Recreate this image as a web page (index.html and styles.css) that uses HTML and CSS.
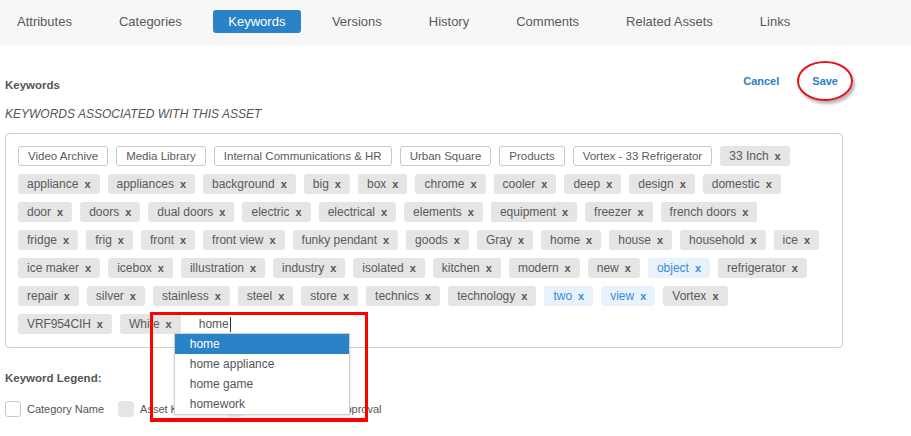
FILE: index.html
```html
<!DOCTYPE html>
<html lang="en">
<head>
<meta charset="utf-8">
<title>Keywords</title>
<link rel="stylesheet" href="styles.css">
</head>
<body>
<nav class="tabs">
  <a class="tab">Attributes</a>
  <a class="tab">Categories</a>
  <a class="tab active">Keywords</a>
  <a class="tab">Versions</a>
  <a class="tab">History</a>
  <a class="tab">Comments</a>
  <a class="tab">Related Assets</a>
  <a class="tab">Links</a>
</nav>
<main class="content">
  <div class="kw-header">
    <h2 class="kw-title">Keywords</h2>
    <div class="actions">
      <a class="action">Cancel</a>
      <a class="action save">Save<span class="circle"></span></a>
    </div>
  </div>
  <p class="subtitle">KEYWORDS ASSOCIATED WITH THIS ASSET</p>
  <div class="tagbox">
    <span class="tag cat">Video Archive</span>
    <span class="tag cat">Media Library</span>
    <span class="tag cat">Internal Communications &amp; HR</span>
    <span class="tag cat">Urban Square</span>
    <span class="tag cat">Products</span>
    <span class="tag cat">Vortex - 33 Refrigerator</span>
    <span class="tag">33 Inch<b class="x">x</b></span>
    <span class="tag">appliance<b class="x">x</b></span>
    <span class="tag">appliances<b class="x">x</b></span>
    <span class="tag">background<b class="x">x</b></span>
    <span class="tag">big<b class="x">x</b></span>
    <span class="tag">box<b class="x">x</b></span>
    <span class="tag">chrome<b class="x">x</b></span>
    <span class="tag">cooler<b class="x">x</b></span>
    <span class="tag">deep<b class="x">x</b></span>
    <span class="tag">design<b class="x">x</b></span>
    <span class="tag">domestic<b class="x">x</b></span>
    <span class="tag">door<b class="x">x</b></span>
    <span class="tag">doors<b class="x">x</b></span>
    <span class="tag">dual doors<b class="x">x</b></span>
    <span class="tag">electric<b class="x">x</b></span>
    <span class="tag">electrical<b class="x">x</b></span>
    <span class="tag">elements<b class="x">x</b></span>
    <span class="tag">equipment<b class="x">x</b></span>
    <span class="tag">freezer<b class="x">x</b></span>
    <span class="tag">french doors<b class="x">x</b></span>
    <span class="tag">fridge<b class="x">x</b></span>
    <span class="tag">frig<b class="x">x</b></span>
    <span class="tag">front<b class="x">x</b></span>
    <span class="tag">front view<b class="x">x</b></span>
    <span class="tag">funky pendant<b class="x">x</b></span>
    <span class="tag">goods<b class="x">x</b></span>
    <span class="tag">Gray<b class="x">x</b></span>
    <span class="tag">home<b class="x">x</b></span>
    <span class="tag">house<b class="x">x</b></span>
    <span class="tag">household<b class="x">x</b></span>
    <span class="tag">ice<b class="x">x</b></span>
    <span class="tag">ice maker<b class="x">x</b></span>
    <span class="tag">icebox<b class="x">x</b></span>
    <span class="tag">illustration<b class="x">x</b></span>
    <span class="tag">industry<b class="x">x</b></span>
    <span class="tag">isolated<b class="x">x</b></span>
    <span class="tag">kitchen<b class="x">x</b></span>
    <span class="tag">modern<b class="x">x</b></span>
    <span class="tag">new<b class="x">x</b></span>
    <span class="tag pending">object<b class="x">x</b></span>
    <span class="tag">refrigerator<b class="x">x</b></span>
    <span class="tag">repair<b class="x">x</b></span>
    <span class="tag">silver<b class="x">x</b></span>
    <span class="tag">stainless<b class="x">x</b></span>
    <span class="tag">steel<b class="x">x</b></span>
    <span class="tag">store<b class="x">x</b></span>
    <span class="tag">technics<b class="x">x</b></span>
    <span class="tag">technology<b class="x">x</b></span>
    <span class="tag pending">two<b class="x">x</b></span>
    <span class="tag pending">view<b class="x">x</b></span>
    <span class="tag">Vortex<b class="x">x</b></span>
    <span class="tag code">VRF954CIH<b class="x">x</b></span>
    <span class="tag">White<b class="x">x</b></span>
    <span class="entry">
      <span class="entry-text">home</span><span class="caret"></span>
      <ul class="suggest">
        <li class="sel">home</li>
        <li>home appliance</li>
        <li>home game</li>
        <li>homework</li>
      </ul>
      <span class="highlight"></span>
    </span>
  </div>
  <h3 class="legend-title">Keyword Legend:</h3>
  <div class="legend">
    <span class="legend-item"><span class="swatch sw-cat"></span>Category Name</span>
    <span class="legend-item"><span class="swatch sw-asset"></span>Asset Keyword</span>
    <span class="legend-item"><span class="swatch sw-pending"></span>Pending Keyword Approval</span>
  </div>
</main>
</body>
</html>
```

FILE: styles.css
```css
* { box-sizing: border-box; }
html { height: 100%; }
html, body { margin: 0; padding: 0; background: #fff; }
body {
  min-height: 100%;
  font-family: "Liberation Sans", Arial, sans-serif;
  color: #555;
  font-size: 12px;
}
.tabs {
  display: flex;
  align-items: flex-start;
  gap: 15px;
  height: 45px;
  padding: 10px 0 0 1px;
  background: #f7f7f7;
}
.tab {
  display: block;
  height: 23px;
  line-height: 23px;
  padding: 0 16px;
  font-size: 13px;
  color: #595959;
  border-radius: 3px;
}
.tab.active {
  background: #2a82c7;
  color: #fff;
  padding: 0 15.5px;
}
.content {
  width: 843px;
  padding-left: 5px;
  padding-bottom: 20px;
}
.kw-header {
  display: flex;
  justify-content: space-between;
  align-items: flex-start;
  margin-top: 28px;
}
.kw-title {
  margin: 4px 0 0;
  font-size: 11.5px;
  line-height: 16px;
  font-weight: bold;
  color: #555;
}
.actions {
  display: flex;
  gap: 33px;
  padding-right: 5px;
}
.action {
  font-size: 11px;
  line-height: 16px;
  font-weight: bold;
  color: #2e7ec0;
}
.save { position: relative; }
.circle {
  position: absolute;
  left: -15px;
  top: -12px;
  width: 56px;
  height: 40px;
  border: 2px solid #e1141c;
  border-radius: 50%;
  box-shadow: 2px 3px 3px rgba(0,0,0,0.28);
}
.subtitle {
  margin: 13px 0 0;
  font-size: 12px;
  line-height: 16px;
  font-style: italic;
  color: #555;
}
.tagbox {
  margin-top: 11px;
  border: 1px solid #cfcfcf;
  border-radius: 4px;
  padding: 12px 12px 5px 12px;
  display: flex;
  flex-wrap: wrap;
  align-items: flex-start;
}
.tag {
  display: inline-flex;
  align-items: center;
  height: 20px;
  line-height: 20px;
  padding: 0 9px;
  margin: 0 8px 8px 0;
  background: #e5e5e5;
  border-radius: 3px;
  color: #5a5a5a;
  white-space: nowrap;
  font-size: 12px;
}
.tag.cat {
  background: #fff;
  border: 1px solid #c9c9c9;
  line-height: 18px;
  font-size: 11.5px;
}
.tag.code { letter-spacing: -0.1px; }
.tag.pending {
  background: #e7f2fc;
  color: #3d8bd2;
}
.x {
  font-size: 11px;
  font-weight: bold;
  margin-left: 6px;
  color: #555;
  letter-spacing: 0;
}
.tag.pending .x { color: #3d8bd2; }
.entry {
  position: relative;
  display: inline-flex;
  align-items: center;
  height: 20px;
  padding-left: 10px;
  margin-bottom: 8px;
  font-size: 12px;
  color: #555;
}
.caret {
  display: inline-block;
  width: 1px;
  height: 15px;
  background: #333;
  margin-left: 1px;
}
.suggest {
  position: absolute;
  left: -15px;
  top: 19px;
  width: 176px;
  margin: 0;
  padding: 0;
  list-style: none;
  background: #fff;
  border: 1px solid #cfcfcf;
  box-shadow: 0 1px 3px rgba(0,0,0,0.12);
  z-index: 2;
}
.suggest li {
  height: 20px;
  line-height: 20px;
  padding-left: 15px;
  font-size: 12px;
  color: #555;
  white-space: nowrap;
}
.suggest li.sel {
  background: #2a82c7;
  color: #fff;
}
.highlight {
  position: absolute;
  left: -39px;
  top: -2px;
  width: 218px;
  height: 110px;
  border: 3px solid #ff0000;
  border-bottom-width: 4px;
  z-index: 3;
}
.legend-title {
  margin: 22px 0 0;
  font-size: 11.5px;
  line-height: 16px;
  font-weight: bold;
  color: #555;
}
.legend {
  display: flex;
  gap: 14px;
  margin-top: 15px;
}
.legend-item {
  display: inline-flex;
  align-items: center;
  gap: 6px;
  height: 16px;
  font-size: 11px;
  color: #555;
}
.swatch {
  display: inline-block;
  width: 16px;
  height: 16px;
  border-radius: 3px;
}
.sw-cat { border: 1px solid #c9c9c9; background: #fff; }
.sw-asset { background: #e5e5e5; }
.sw-pending { background: #e7f2fc; }
```
